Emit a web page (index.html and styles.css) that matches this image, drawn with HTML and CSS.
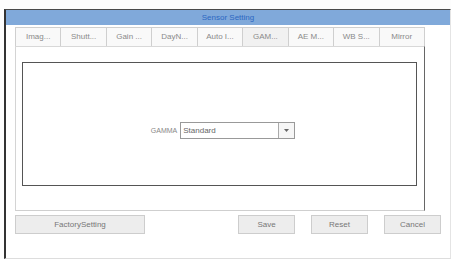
FILE: index.html
```html
<html lang="en">
<head>
    <meta charset="UTF-8">
    <title>Sensor Setting</title>
    <link rel="stylesheet" href="styles.css">
</head>
<body>
    <div class="window">
        <div class="titlebar">Sensor Setting</div>
        <div class="content">
            <div class="tabs">
                <div class="tab">Imag...</div>
                <div class="tab">Shutt...</div>
                <div class="tab">Gain ...</div>
                <div class="tab">DayN...</div>
                <div class="tab">Auto I...</div>
                <div class="tab active">GAM...</div>
                <div class="tab">AE M...</div>
                <div class="tab">WB S...</div>
                <div class="tab">Mirror</div>
            </div>
            <div class="panel">
                <div class="inner">
                    <div class="field">
                        <span class="label">GAMMA</span>
                        <div class="select">
                            <span class="value">Standard</span>
                            <span class="arrow">
                                <svg width="5" height="3" viewBox="0 0 5 3"><path d="M0 0 L5 0 L2.5 3 Z" fill="#666"/></svg>
                            </span>
                        </div>
                    </div>
                </div>
            </div>
            <div class="buttons">
                <button class="btn factory">FactorySetting</button>
                <div class="right-buttons">
                    <button class="btn">Save</button>
                    <button class="btn">Reset</button>
                    <button class="btn">Cancel</button>
                </div>
            </div>
        </div>
    </div>
</body>
</html>
```

FILE: styles.css
```css
body{
    margin: 0;
    padding: 0;
    background-color: #fdfdfd;
    font-family: "Liberation Sans", Arial, sans-serif;
    font-size: 8px;
    color: #7a7a7a;
}

.window{
    margin-top: 9px;
    margin-left: 4px;
    height: 248px;
    border-top: 1px solid #4a4a4a;
    border-left: 2px solid #333;
    border-bottom: 1px solid #ddd;
    border-right: 1px solid #e4e4e4;
    background-color: #fff;
}
.titlebar{
    height: 15px;
    line-height: 15px;
    background-color: #80a9da;
    color: #2d68c2;
    text-align: center;
    font-size: 8px;
}
.content{
    padding-left: 9px;
    padding-top: 2px;
}

.tabs{
    display: flex;
    width: 410px;
    height: 19px;
}
.tab{
    flex: 1;
    border: 1px solid #cfcfcf;
    border-right: none;
    border-bottom: none;
    background-color: #f9f9f9;
    text-align: center;
    line-height: 18px;
    color: #8a8a8a;
}
.tab:last-child{
    border-right: 1px solid #cfcfcf;
}
.tab.active{
    background-color: #f1f1f1;
}

.panel{
    border-left: 1px solid #d4d4d4;
    border-right: 1px solid #666;
    border-bottom: 1px solid #cfcfcf;
    border-top: 1px solid #d8d8d8;
    padding: 15px 7px 0 6px;
    box-sizing: border-box;
    width: 410px;
    height: 165px;
}
.inner{
    height: 124px;
    border: 1px solid #555;
    display: flex;
    justify-content: center;
    align-items: center;
    padding-top: 12px;
    padding-left: 7px;
    box-sizing: border-box;
}
.field{
    display: flex;
    align-items: center;
}
.label{
    margin-right: 3px;
    font-size: 7px;
    color: #888;
}
.select{
    display: flex;
    width: 115px;
    height: 17px;
    border: 1px solid #999;
    box-sizing: border-box;
    background-color: #fff;
}
.value{
    flex: 1;
    padding-left: 2px;
    line-height: 15px;
    color: #666;
}
.arrow{
    width: 15px;
    border-left: 1px solid #aaa;
    display: flex;
    align-items: center;
    justify-content: center;
    background-color: #f6f6f6;
}

.buttons{
    display: flex;
    justify-content: space-between;
    width: 426px;
    margin-top: 4px;
}
.right-buttons{
    display: flex;
    gap: 16px;
}
.btn{
    height: 19px;
    width: 57px;
    padding: 0;
    border: 1px solid #cdcdcd;
    background-color: #ededed;
    font-family: "Liberation Sans", Arial, sans-serif;
    font-size: 8px;
    color: #777;
}
.btn.factory{
    width: 130px;
}
```
